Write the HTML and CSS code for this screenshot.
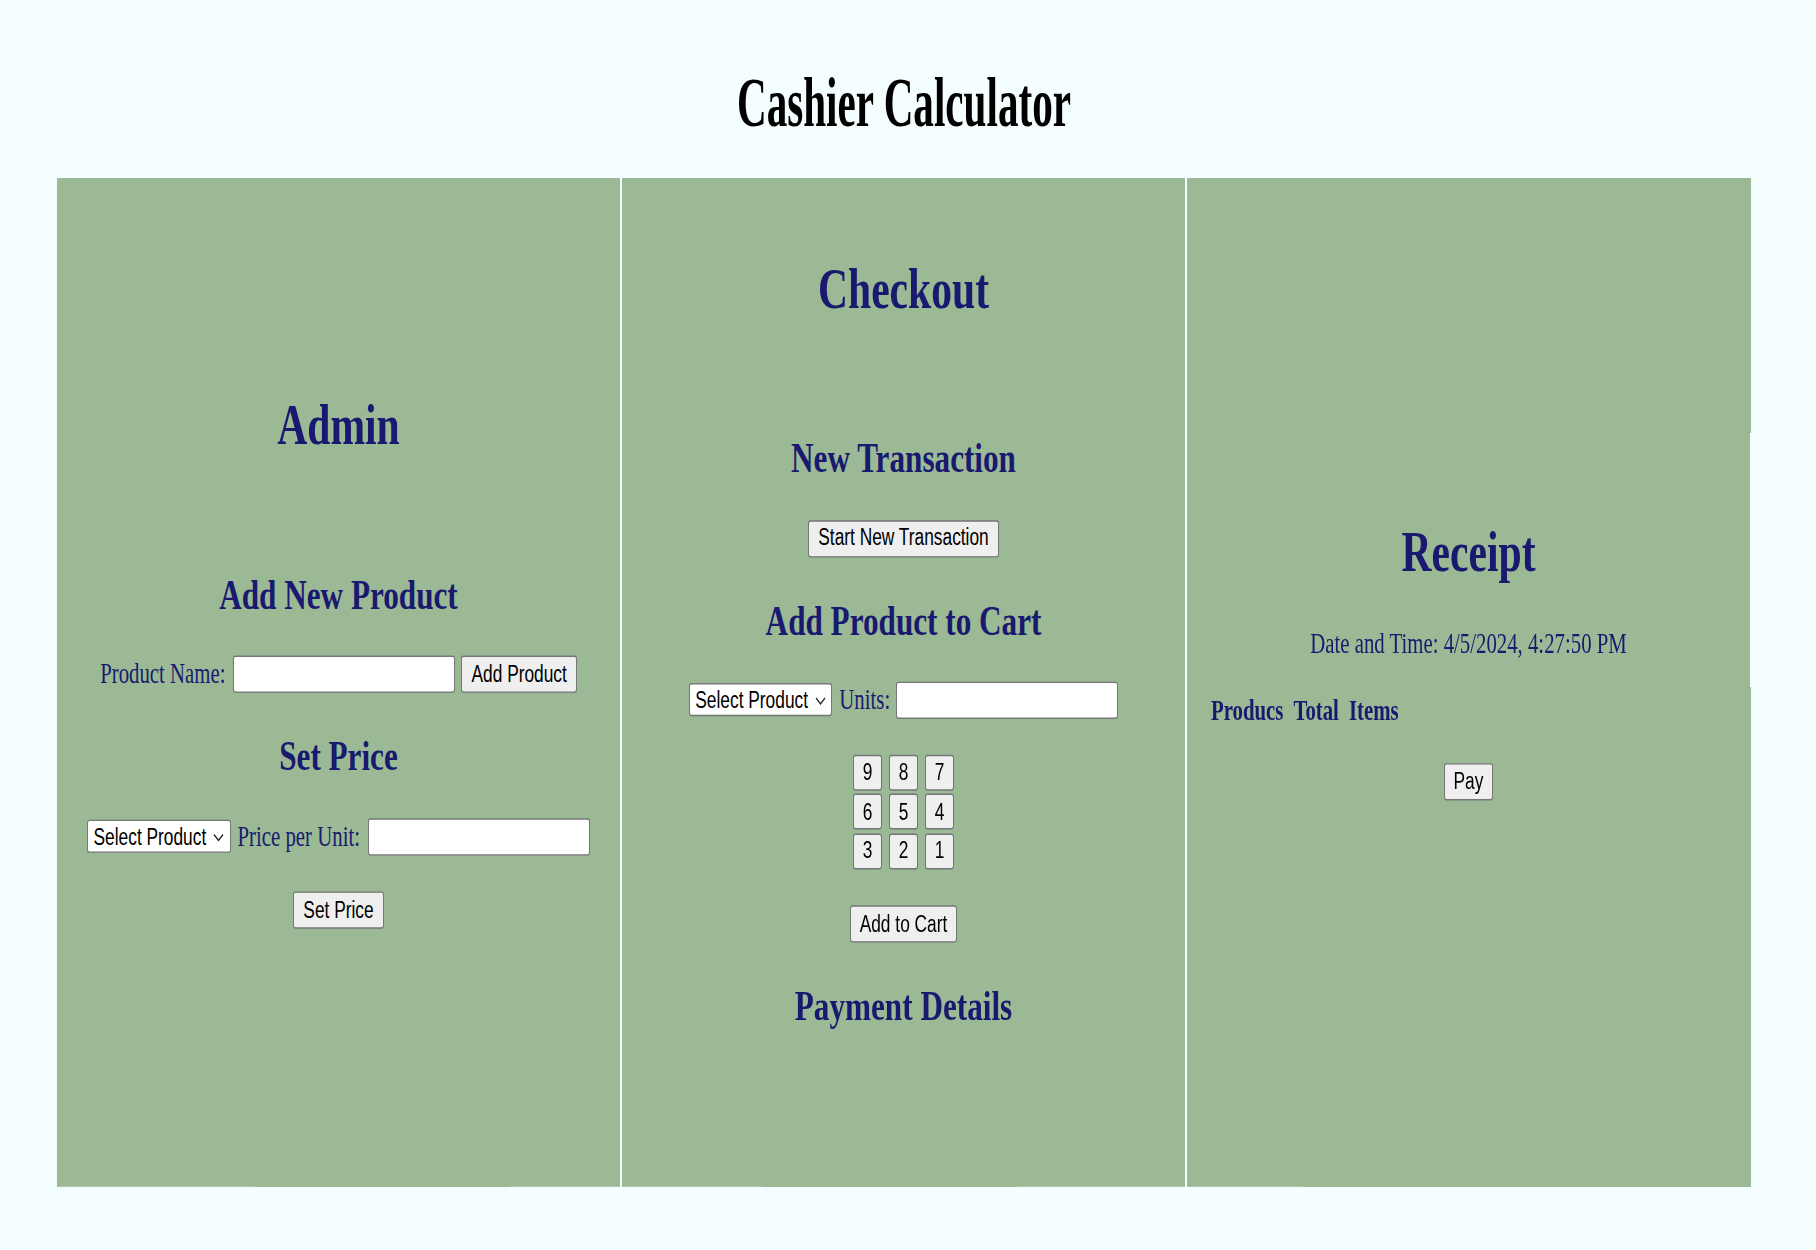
FILE: index.html
```html
<!DOCTYPE html>
<html lang="en">
<head>
<meta charset="utf-8">
<title>Cashier Calculator</title>
<link rel="stylesheet" href="styles.css">
</head>
<body>
<div class="stage">
  <h1 class="app-title"><span>Cashier Calculator</span></h1>
  <main class="panels">
    <section class="panel panel-admin">
      <h2 class="panel-title">Admin</h2>
      <h3 class="section-title">Add New Product</h3>
      <div class="control-row">
        <label class="field-label" for="productName">Product Name:</label>
        <input class="text-input ml-8" id="productName" type="text">
        <button class="btn ml-6" type="button">Add Product</button>
      </div>
      <h3 class="section-title">Set Price</h3>
      <div class="control-row">
        <span class="select-wrap">
          <select class="select-input"><option>Select Product</option></select>
          <svg class="chevron" viewBox="0 0 11 6" width="11" height="6"><path d="M1 0.8 L5.5 5 L10 0.8" fill="none" stroke="#222" stroke-width="1.2"/></svg>
        </span>
        <label class="field-label ml-7" for="pricePerUnit">Price per Unit:</label>
        <input class="text-input ml-8" id="pricePerUnit" type="text">
      </div>
      <button class="btn block-btn last-admin" type="button">Set Price</button>
    </section>

    <section class="panel panel-checkout">
      <h2 class="panel-title">Checkout</h2>
      <h3 class="section-title">New Transaction</h3>
      <button class="btn block-btn" type="button">Start New Transaction</button>
      <h3 class="section-title">Add Product to Cart</h3>
      <div class="control-row">
        <span class="select-wrap">
          <select class="select-input"><option>Select Product</option></select>
          <svg class="chevron" viewBox="0 0 11 6" width="11" height="6"><path d="M1 0.8 L5.5 5 L10 0.8" fill="none" stroke="#222" stroke-width="1.2"/></svg>
        </span>
        <label class="field-label ml-7" for="units">Units:</label>
        <input class="text-input ml-6" id="units" type="text">
      </div>
      <div class="keypad">
        <button class="btn key" type="button">9</button>
        <button class="btn key" type="button">8</button>
        <button class="btn key" type="button">7</button>
        <button class="btn key" type="button">6</button>
        <button class="btn key" type="button">5</button>
        <button class="btn key" type="button">4</button>
        <button class="btn key" type="button">3</button>
        <button class="btn key" type="button">2</button>
        <button class="btn key" type="button">1</button>
      </div>
      <button class="btn block-btn" type="button">Add to Cart</button>
      <h3 class="section-title last-checkout">Payment Details</h3>
    </section>

    <section class="panel panel-receipt">
      <h2 class="panel-title">Receipt</h2>
      <p class="receipt-date">Date and Time: 4/5/2024, 4:27:50 PM</p>
      <table class="receipt-table">
        <thead>
          <tr><th>Producs</th><th>Total</th><th>Items</th></tr>
        </thead>
      </table>
      <button class="btn block-btn pay-btn" type="button">Pay</button>
    </section>
  </main>
</div>
</body>
</html>
```
FILE: styles.css
```css
html {
  background: #f4fefe;
}

body {
  margin: 0;
  min-height: 100vh;
}

.stage {
  transform: scaleY(1.38);
  transform-origin: 0 0;
  padding-top: 44.4px;
  font-family: "Liberation Serif", "Times New Roman", serif;
}

.app-title {
  margin: 0 0 0 57px;
  width: 1693px;
  text-align: center;
  font-size: 50px;
  line-height: 60px;
  font-weight: bold;
  color: #000;
}

.app-title span {
  display: inline-block;
  transform: scaleX(0.823);
}

.panels {
  display: grid;
  grid-template-columns: repeat(3, 1fr);
  column-gap: 2px;
  width: 1693px;
  margin: 24.6px 0 0 57px;
}

.panel {
  background: #9bb994;
  display: flex;
  flex-direction: column;
  align-items: center;
  justify-content: center;
  padding: 56.2px 0;
}

.panel-title {
  margin: 0;
  font-size: 41.6px;
  line-height: 49.92px;
  font-weight: bold;
  color: #191970;
}

.section-title {
  margin: 27px 0 0;
  font-size: 31.2px;
  line-height: 37.44px;
  font-weight: bold;
  color: #191970;
}

.panel-title + .section-title {
  margin-top: 78px;
}

.control-row {
  display: flex;
  align-items: center;
  margin-top: 26px;
}

.field-label {
  font-size: 20.8px;
  line-height: 24.96px;
  color: #191970;
}

.text-input {
  width: 222px;
  height: 27px;
  box-sizing: border-box;
  border: 1px solid #767676;
  border-radius: 2.5px;
  background: #fff;
  padding: 0 3px;
  margin: 0;
  font: 17.33px "Liberation Sans", Arial, sans-serif;
}

.select-wrap {
  position: relative;
  display: inline-block;
  height: 24px;
}

.select-input {
  appearance: none;
  -webkit-appearance: none;
  width: 143.5px;
  height: 24px;
  box-sizing: border-box;
  border: 1px solid #767676;
  border-radius: 2.5px;
  background: #fff;
  padding: 0 0 0 5.5px;
  margin: 0;
  font: 17.33px "Liberation Sans", Arial, sans-serif;
  color: #000;
}

.chevron {
  position: absolute;
  right: 6.5px;
  top: 9.5px;
}

.btn {
  height: 27px;
  box-sizing: border-box;
  padding: 0 9px;
  margin: 0;
  border: 1px solid #767676;
  border-radius: 2.5px;
  background: #efefef;
  font: 17.33px/1 "Liberation Sans", Arial, sans-serif;
  color: #000;
}

.block-btn {
  margin-top: 26px;
}

.ml-6 { margin-left: 6px; }
.ml-7 { margin-left: 7px; }
.ml-8 { margin-left: 8px; }

.keypad {
  display: grid;
  grid-template-columns: repeat(3, 29px);
  column-gap: 7px;
  row-gap: 2.5px;
  margin-top: 26px;
}

.key {
  width: 29px;
  height: 26px;
  padding: 0;
}

.receipt-date {
  margin: 28px 0 0;
  font-size: 20.8px;
  line-height: 24.96px;
  color: #191970;
}

.receipt-table {
  align-self: flex-start;
  margin: 24px 0 0 17.5px;
  border-spacing: 3px 0;
}

.receipt-table th {
  padding: 0 3.5px;
  font-size: 20.8px;
  line-height: 24.96px;
  font-weight: bold;
  color: #191970;
}

.pay-btn {
  margin-top: 25.5px;
  margin-bottom: 33px;
}

.last-admin {
  margin-bottom: 32px;
}

.last-checkout {
  margin-bottom: 56px;
}
```
